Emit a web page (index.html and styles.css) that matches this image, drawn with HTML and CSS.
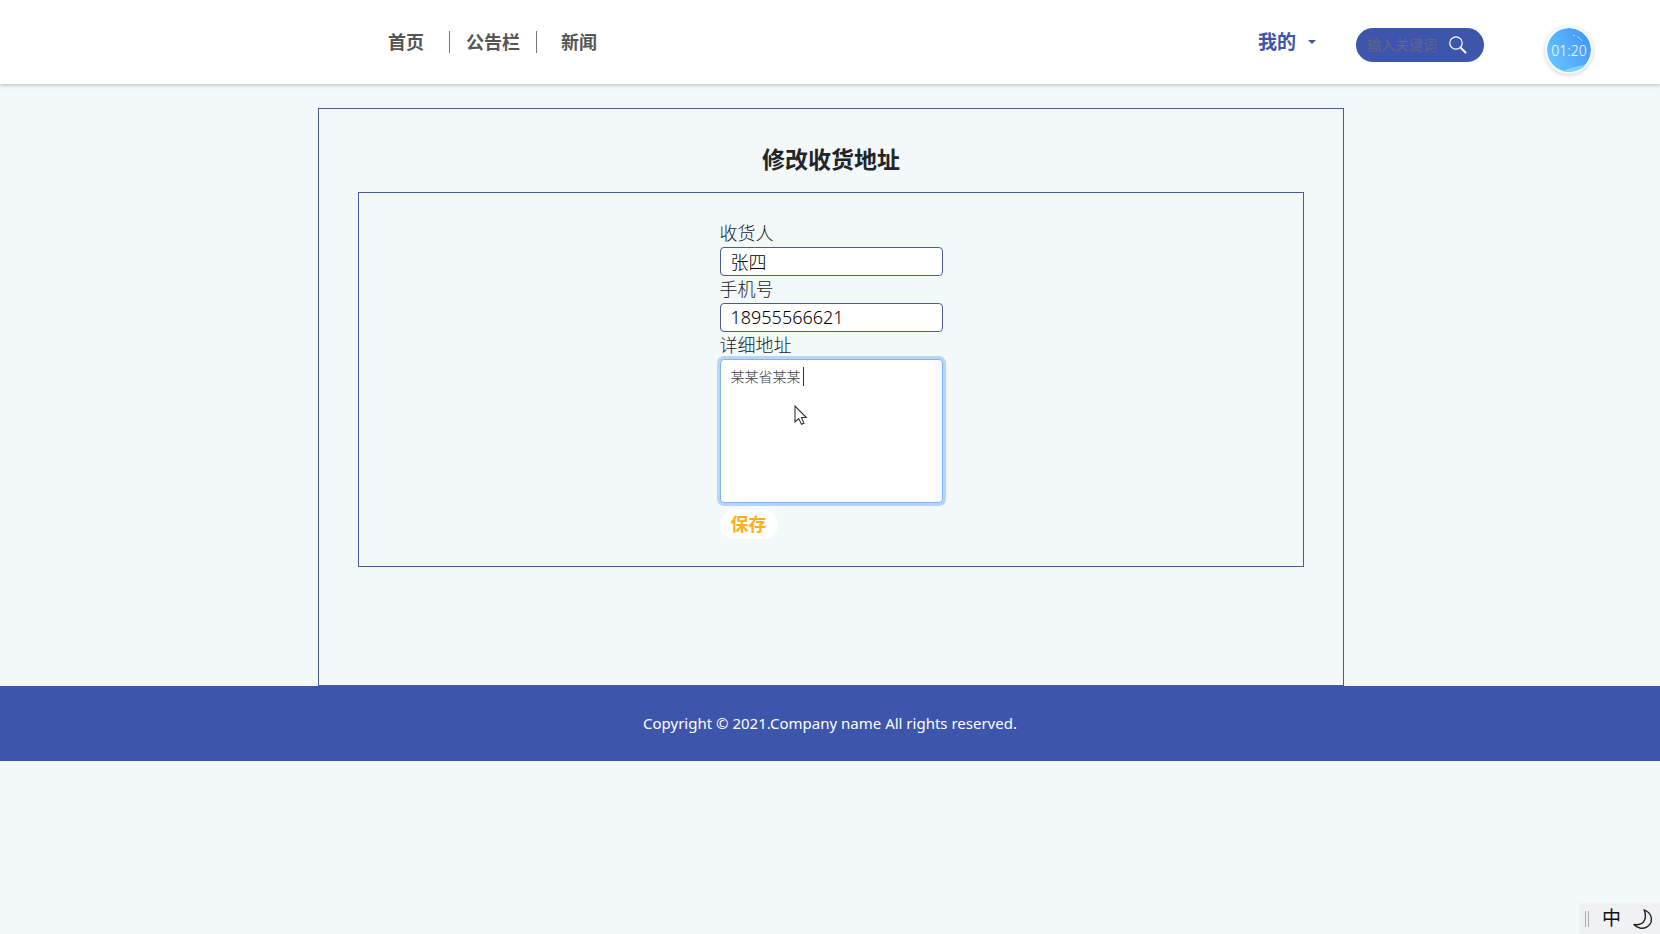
FILE: index.html
```html
<!DOCTYPE html>
<html lang="zh-CN">
<head>
<meta charset="utf-8">
<title>修改收货地址</title>
<link rel="stylesheet" href="styles.css">
</head>
<body>
<header class="header">
  <nav class="nav">
    <a class="nav-link nav-home" href="#">首页</a>
    <a class="nav-link nav-board" href="#">公告栏</a>
    <a class="nav-link nav-news" href="#">新闻</a>
  </nav>
  <div class="tools">
    <button class="account" type="button">我的<span class="caret"></span></button>
    <form class="search">
      <input class="search-input" type="text" placeholder="输入关键词" aria-label="输入关键词">
      <button class="search-button" type="button" aria-label="搜索">
        <svg class="search-icon" viewBox="0 0 18 18" fill="none" stroke="#fff"><circle cx="7" cy="7" r="6.2" stroke-width="1.2"/><path d="M11.600 11.600L16.500 16.500" stroke-width="2" stroke-linecap="round"/></svg>
      </button>
    </form>
  </div>
</header>
<div class="timer">
  <svg class="timer-art" viewBox="0 0 44 44" fill="none"><path d="M16 43Q27 38 39 37Q33 43 22 44Q18 44 16 43Z" fill="#7fd4fd"/><path d="M26 7L28 7.500M30 8.500Q33 10 35 13" stroke="#a9d5ff" stroke-width="1"/></svg>
  <span class="timer-text">01:20</span>
</div>
<div class="content">
  <main class="page">
    <h1 class="title">修改收货地址</h1>
    <section class="panel">
      <form class="form">
        <label class="label" for="name">收货人</label>
        <input class="field" id="name" type="text" value="张四">
        <label class="label" for="phone">手机号</label>
        <input class="field" id="phone" type="text" value="18955566621">
        <label class="label" for="address">详细地址</label>
        <div class="area-wrap">
          <textarea class="area" id="address">某某省某某</textarea>
          <span class="text-caret"></span>
          <svg class="pointer" viewBox="0 0 14 21"><path d="M1 1V17L4.700 13.600L7.500 19.200L10 18.100L7.400 12.500H12.300Z" fill="#fff" stroke="#333" stroke-width="1.100"/></svg>
        </div>
        <button class="save" type="button">保存</button>
      </form>
    </section>
  </main>
</div>
<footer class="footer">Copyright © 2021.Company name All rights reserved.</footer>
<div class="ime">
  <span class="ime-grip"></span>
  <span class="ime-lang">中</span>
  <svg class="ime-moon" viewBox="0 0 20 20" fill="none" stroke="#222" stroke-width="1.400" stroke-linejoin="round"><path d="M11 .8C20 4 20.500 14 14 17.800C9.500 20.400 4 19.300 1 15.500C6 16.500 10.500 14.500 11.800 10.500C12.800 7.300 12.500 4 11 .8Z"/></svg>
</div>
</body>
</html>
```
FILE: styles.css
```css
* { box-sizing: border-box; }
body {
  margin: 0;
  min-height: 100vh;
  background: #f3f8f9;
  color: #212529;
  font-family: "Noto Sans", "Noto Sans CJK SC", sans-serif;
  font-size: 18px;
  line-height: 27px;
}
button, input, textarea { font-family: inherit; margin: 0; }
.header {
  display: flex;
  justify-content: space-between;
  align-items: center;
  height: 84px;
  padding: 0 176px 0 388px;
  background: #fff;
  box-shadow: 0 1px 4px rgba(0, 0, 0, .25);
}
.nav { display: flex; align-items: center; }
.nav-link {
  color: #555;
  font-weight: 700;
  line-height: 22px;
  text-decoration: none;
}
.nav-home { padding-right: 25px; border-right: 1px solid #777; }
.nav-board { padding: 0 16px; border-right: 1px solid #777; }
.nav-news { padding-left: 24px; }
.tools { display: flex; align-items: center; gap: 40px; }
.account {
  display: flex;
  align-items: center;
  gap: 12px;
  padding: 0;
  border: 0;
  background: none;
  color: #3d55aa;
  font-size: 19px;
  font-weight: 700;
  line-height: 28px;
}
.caret { border: 4px solid transparent; border-top-color: #3d55aa; border-bottom: 0; }
.search {
  display: flex;
  align-items: center;
  width: 128px;
  height: 34px;
  margin-top: 6px;
  padding: 0 17px 0 11px;
  border-radius: 17px;
  background: #3d55aa;
}
.search-input {
  flex: 1;
  min-width: 0;
  padding: 0;
  border: 0;
  outline: 0;
  background: none;
  color: #fff;
  font-size: 14px;
  line-height: 20px;
}
.search-input::placeholder { color: #5f6782; opacity: 1; }
.search-button { display: flex; padding: 0; border: 0; background: none; }
.search-icon { width: 18px; height: 18px; }
.timer {
  position: absolute;
  top: 26px;
  right: 67px;
  display: grid;
  place-items: center;
  width: 48px;
  height: 48px;
  border: 2px solid #ecfbff;
  border-radius: 50%;
  background: linear-gradient(60deg, #6ccafd, #4090f7) padding-box;
  box-shadow: 0 1px 4px rgba(0, 0, 0, .2);
  color: #fff;
  font-size: 14px;
  font-weight: 300;
}
.timer-art, .timer-text { grid-area: 1 / 1; }
.timer-art { width: 44px; height: 44px; }
.content { padding: 24px 0 0 2px; }
.page {
  width: 1026px;
  max-width: 100%;
  min-height: 578px;
  margin: 0 auto;
  padding: 34px 39px 39px;
  border: 1px solid #4c5b91;
}
.title { margin: 0 0 17px; font-size: 23px; line-height: 32px; text-align: center; }
.panel { padding: 27px 0; border: 1px solid #4c5b91; }
.form { display: flex; flex-direction: column; width: 223px; margin: 0 auto; }
.label { font-weight: 300; }
.field {
  height: 29px;
  padding: 0 10px 2px;
  border: 1px solid #4c5b91;
  border-radius: 4px;
  background: #fff;
  color: #000;
  font-size: 18px;
  font-weight: 300;
}
.area-wrap { position: relative; display: flex; }
.area {
  flex: 1;
  min-width: 0;
  height: 144px;
  padding: 6px 10px;
  border: 1px solid #80b5f5;
  border-radius: 4px;
  outline: 0;
  box-shadow: 0 0 0 3px #b5d6fa;
  background: linear-gradient(#f8f9fa, #f8f9fa) right / 7px 100% no-repeat #fff;
  color: #3c4247;
  font-size: 14px;
  font-weight: 300;
  line-height: 21px;
  resize: none;
}
.text-caret { position: absolute; top: 8px; left: 83px; width: 1px; height: 19px; background: #333; }
.pointer { position: absolute; top: 46px; left: 74px; width: 14px; height: 21px; }
.save {
  align-self: flex-start;
  height: 29px;
  margin-top: 7px;
  padding: 0 11px;
  border: 0;
  border-radius: 15px;
  background: #fff;
  color: #ffaf1c;
  font-size: 18px;
  font-weight: 700;
  line-height: 27px;
}
.footer {
  padding: 24px;
  background: #3d55aa;
  color: #fff;
  font-size: 15px;
  text-align: center;
}
.ime {
  position: fixed;
  right: 0;
  bottom: 0;
  display: flex;
  align-items: center;
  width: 81px;
  height: 31px;
  padding: 0 7px 0 6px;
  background: #f0f1f3;
  color: #111;
}
.ime-grip { width: 4px; height: 16px; border: 1px solid #aaa; border-width: 0 1px; }
.ime-lang { margin: 0 12px 0 13px; font-size: 19px; }
.ime-moon { width: 20px; height: 20px; }
```
